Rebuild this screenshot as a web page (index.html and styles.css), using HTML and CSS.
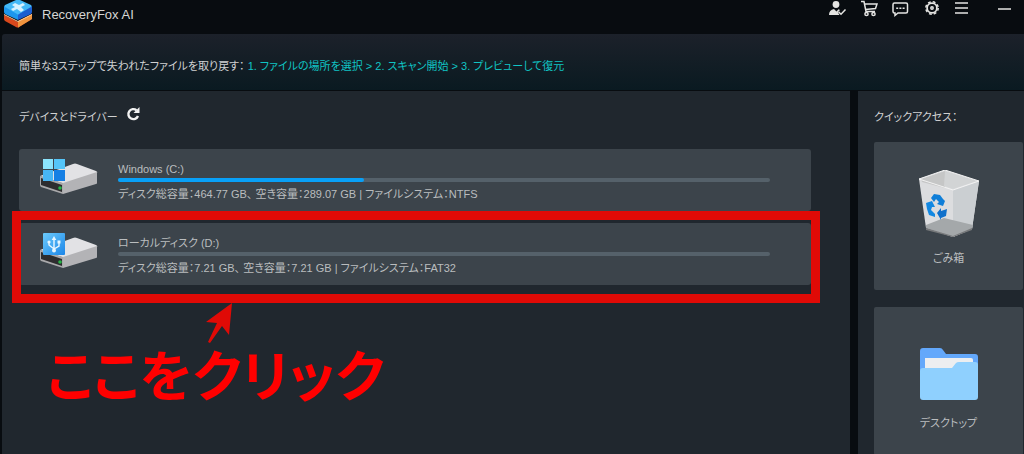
FILE: index.html
```html
<!DOCTYPE html>
<html lang="ja">

<head>
    <meta charset="UTF-8">
    <meta name="viewport" content="width=device-width, initial-scale=1.0">
    <title>RecoveryFox AI</title>
    <link rel="stylesheet" href="styles.css">
</head>

<body>
    <header class="topbar">
        <svg class="logo" viewBox="0 0 28 28" aria-hidden="true">
            <path d="M0 15L14 22L28 14V19L15 27Q14 28 12 27L1 21Q0 20 0 19Z" fill="#d8481c" />
            <path d="M14 21L28 14V19L15 27Q14 28 14 27Z" fill="#f0953f" />
            <path d="M0 14L14 21L28 14V15L14 22L0 15Z" fill="#f9c79a" />
            <path d="M0 6L14 13V20L1 14Q0 13 0 12Z" fill="#1c96ec" />
            <path d="M28 6L14 13V20L27 14Q28 13 28 12Z" fill="#1d5fd0" />
            <path d="M12 0Q14-1 16 0L27 5Q28 6 27 7L15 14Q14 15 13 14L1 7Q0 6 1 5Z" fill="#43b9f7" />
            <path d="M8 5L11 3L15 5L19 3L21 5L17 7L20 10L17 12L13 9L9 11L7 9L11 7Z" fill="#d6f2ff" />
        </svg>
        <h1 class="title">RecoveryFox AI</h1>
        <nav class="tools">
            <button class="tool" aria-label="アカウント">
                <svg viewBox="0 0 18 18">
                    <circle cx="7" cy="4.5" r="3.4" fill="#e4e4e2" />
                    <path d="M0 15Q0 10 5 9L7.5 11.5L9.5 9.2L11 10L8.8 12.2L10.5 15Z" fill="#e4e4e2" />
                    <path d="M9.5 11.8L12 14.2L16.5 9.5" />
                </svg>
            </button>
            <button class="tool" aria-label="カート">
                <svg viewBox="0 0 18 18">
                    <path d="M1 1.5H4L6 11.5H15M4.5 4H17L15.5 8.5L5.5 9.5" />
                    <circle cx="6.5" cy="14" r="1.6" />
                    <circle cx="13.5" cy="14" r="1.6" />
                </svg>
            </button>
            <button class="tool" aria-label="チャット">
                <svg viewBox="0 0 18 18">
                    <path d="M3.5 3H15Q16.5 3 16.5 4.5V11.5Q16.5 13 15 13H7L4 15.5V13H3.5Q2 13 2 11.5V4.5Q2 3 3.5 3Z" />
                    <path d="M5.2 8.2h2M8.4 8.2h2M11.6 8.2h2" />
                </svg>
            </button>
            <button class="tool" aria-label="設定">
                <svg viewBox="0 0 18 18">
                    <circle cx="10" cy="8" r="6.2" stroke-dasharray="2.8 2.07" />
                    <circle cx="10" cy="8" r="4.9" stroke-width="1.8" />
                    <circle cx="10" cy="8" r="1.2" />
                </svg>
            </button>
            <button class="tool" aria-label="メニュー">
                <svg viewBox="0 0 18 18">
                    <path d="M2 3H15M2 8H15M2 13H15" />
                </svg>
            </button>
            <button class="tool minimize" aria-label="最小化">
                <svg viewBox="0 0 18 18">
                    <path d="M2 9H15" />
                </svg>
            </button>
        </nav>
    </header>

    <div class="banner">
        <p>簡単な3ステップで失われたファイルを取り戻す： <span class="steps">1. ファイルの場所を選択 &gt; 2. スキャン開始 &gt; 3. プレビューして復元</span></p>
    </div>

    <div class="layout">
        <main class="devices">
            <div class="heading">
                <h2>デバイスとドライバー</h2>
                <button class="refresh" aria-label="更新">
                    <svg viewBox="0 0 14 14">
                        <path d="M10.5 3.2A5 5 0 1 0 12 9" fill="none" stroke="#f2f2f2" stroke-width="2.4" />
                        <path d="M13.5 0V6H7.5Z" fill="#f2f2f2" />
                    </svg>
                </button>
            </div>

            <button class="drive">
                <svg class="drive-icon" viewBox="0 0 60 38" aria-hidden="true">
                    <path d="M1 18L34 6Q36 5 38 6L57 13Q59 14 58 15L26 26Z" fill="#e2e2e5" />
                    <path d="M24 25L58 14V25Q58 26 57 26L24 36Z" fill="#b3b3b6" />
                    <path d="M1 18L24 25V36L2 29Q1 28 1 27Z" fill="#a9a9ab" />
                    <path d="M2 20L23 27V34L2 27Z" fill="#2d2d2f" />
                    <circle cx="21" cy="30" r="1.8" fill="#25b545" />
                    <path d="M4 1H14V11H4Z" fill="#8be4fc" />
                    <path d="M15 1H26V11H15Z" fill="#55c5f8" />
                    <path d="M4 12H14V23H4Z" fill="#48b6f5" />
                    <path d="M15 12H26V23H15Z" fill="#157fe4" />
                </svg>
                <span class="drive-info">
                    <span class="drive-name">Windows (C:)</span>
                    <span class="bar"><span class="used" style="width: 37.8%"></span></span>
                    <span class="detail">ディスク総容量：464.77 GB、 空き容量：289.07 GB | ファイルシステム：NTFS</span>
                </span>
            </button>

            <button class="drive">
                <svg class="drive-icon" viewBox="0 0 60 38" aria-hidden="true">
                    <defs>
                        <linearGradient id="usb" x1="0" y1="0" x2="1" y2="1">
                            <stop offset="0" stop-color="#6ccbfc" />
                            <stop offset="1" stop-color="#1c86e8" />
                        </linearGradient>
                    </defs>
                    <path d="M1 18L34 6Q36 5 38 6L57 13Q59 14 58 15L26 26Z" fill="#e2e2e5" />
                    <path d="M24 25L58 14V25Q58 26 57 26L24 36Z" fill="#b3b3b6" />
                    <path d="M1 18L24 25V36L2 29Q1 28 1 27Z" fill="#a9a9ab" />
                    <path d="M2 20L23 27V34L2 27Z" fill="#2d2d2f" />
                    <circle cx="21" cy="30" r="1.8" fill="#25b545" />
                    <rect x="4" y="1" width="22" height="22" rx="1" fill="url(#usb)" />
                    <path d="M15 7V18M10 11V13L15 17L20 14V10" fill="none" stroke="#e8f7ff" stroke-width="1.4" />
                    <path d="M12.7 8L15 4L17.3 8Z" fill="#e8f7ff" />
                    <circle cx="10" cy="10" r="1.6" fill="#e8f7ff" />
                    <circle cx="15" cy="18.5" r="2" fill="#e8f7ff" />
                    <path d="M18.5 8.5h3v3h-3z" fill="#e8f7ff" />
                </svg>
                <span class="drive-info">
                    <span class="drive-name">ローカルディスク (D:)</span>
                    <span class="bar"></span>
                    <span class="detail">ディスク総容量：7.21 GB、 空き容量：7.21 GB | ファイルシステム：FAT32</span>
                </span>
                <span class="marker"></span>
            </button>

            <div class="callout">
                <svg class="arrow" viewBox="0 0 26 41" aria-hidden="true">
                    <path d="M26 0L23 32L16 23L4 40L2 39L11 20L0 19Z" fill="#e00a06" />
                </svg>
                <strong>ここをクリック</strong>
            </div>
        </main>

        <aside class="quick">
            <h2>クイックアクセス：</h2>
            <button class="tile">
                <svg class="bin-icon" viewBox="0 0 60 68" aria-hidden="true">
                    <path d="M0 9L26 0L60 11L53 59L34 67L7 58Z" fill="#dcdddf" />
                    <path d="M2 9L26 1L26 18L3 12Z" fill="#c5c6c6" />
                    <path d="M26 1L58 11L34 19L25 16Z" fill="#d2d4d5" />
                    <path d="M34 20L60 11L53 59L34 67Z" fill="#cbcfd2" />
                    <path d="M7 55L25 48L54 55L53 59L34 67L7 58Z" fill="#a4a8aa" />
                    <path d="M7 58L34 66L53 58V60L34 67L7 60Z" fill="#77797b" />
                    <path d="M0 9L26 0L60 11L34 20Z" fill="none" stroke="#f2f2f2" stroke-width="1" />
                    <path d="M12 28L15 24L21 25L24 29L26 31L24 36L18 34L20 32L17 29L15 32Z" fill="#0f7ed8" />
                    <path d="M7 33L13 31L16 37L13 37L12 40L16 44V47L10 45L8 39Z" fill="#1288e2" />
                    <path d="M18 43L22 38V41L28 39L27 46L22 48V50Z" fill="#0f70cb" />
                </svg>
                <span>ごみ箱</span>
            </button>
            <button class="tile">
                <svg class="folder-icon" viewBox="0 0 58 52" aria-hidden="true">
                    <path d="M3 0H20Q22 0 23 2L26 6H55Q58 6 58 9V40H0V3Q0 0 3 0Z" fill="#63a8fb" />
                    <path d="M5 10H51Q53 10 53 12V30H5Z" fill="#eceef0" />
                    <path d="M3 20H32L36 15Q37 14 39 14H55Q58 14 58 17V49Q58 52 55 52H3Q0 52 0 49V23Q0 20 3 20Z" fill="#8fd0fe" />
                </svg>
                <span>デスクトップ</span>
            </button>
        </aside>
    </div>
</body>

</html>
```

FILE: styles.css
```css
* {
    box-sizing: border-box;
}

body {
    display: flex;
    flex-direction: column;
    height: 100vh;
    margin: 0;
    padding-left: 2px;
    overflow: hidden;
    background-color: #080c10;
    color: #d0d1d2;
    font-family: "Liberation Sans", "Noto Sans CJK JP", sans-serif;
    font-size: 11px;
    font-feature-settings: "palt";
}

h1,
h2,
p {
    margin: 0;
    font-weight: normal;
}

h2 {
    font-size: 11px;
    line-height: 20px;
}

button {
    padding: 0;
    border: 0;
    background: none;
    color: inherit;
    font: inherit;
    font-feature-settings: inherit;
    cursor: pointer;
}

svg {
    display: block;
}

.topbar {
    display: flex;
    flex: none;
    align-items: flex-start;
    height: 34px;
    padding-right: 10px;
}

.logo {
    width: 28px;
    height: 28px;
    margin-left: 2px;
}

.title {
    margin-left: 10px;
    padding-top: 6px;
    color: #d6d6d4;
    font-size: 13px;
    line-height: 18px;
}

.tools {
    display: flex;
    gap: 13px;
    margin-left: auto;
}

.tool svg {
    width: 18px;
    height: 18px;
    fill: none;
    stroke: #e4e4e2;
    stroke-width: 1.5;
}

.tool circle[fill],
.tool path[fill] {
    stroke: none;
}

.minimize {
    margin-left: 12px;
}

.banner {
    display: flex;
    flex: none;
    align-items: center;
    height: 56px;
    padding: 6px 17px 0;
    background: linear-gradient(#1c212a, #0a1a21);
    border-top-left-radius: 3px;
}

.steps {
    color: #10c4c4;
}

.layout {
    display: flex;
    flex: 1;
    gap: 8px;
    min-height: 0;
    margin-top: 1px;
}

.devices {
    flex: 1;
    min-width: 0;
    padding: 16px 39px 0 17px;
    background-color: #20272e;
}

.heading {
    display: flex;
    gap: 8px;
    height: 42px;
}

.refresh {
    align-self: flex-start;
}

.refresh svg {
    width: 14px;
    height: 14px;
}

.drive {
    position: relative;
    display: flex;
    align-items: flex-start;
    width: 100%;
    height: 62px;
    margin-bottom: 12px;
    padding: 9px 41px 0 20px;
    background-color: #3c444b;
    border-radius: 3px;
    color: #babdbf;
    text-align: left;
}

.drive-icon {
    flex: none;
    width: 60px;
    height: 38px;
}

.drive-info {
    flex: 1;
    padding: 3px 0 0 19px;
}

.drive-name,
.bar,
.used,
.detail {
    display: block;
}

.drive-name,
.detail {
    line-height: 16px;
    white-space: nowrap;
}

.bar {
    height: 4px;
    margin: 1px 0 4px;
    background-color: #55616a;
    border-radius: 2px;
}

.used {
    height: 4px;
    background-color: #08a0f7;
    border-radius: 2px;
}

/* red frame around the drive to pick */
.marker {
    position: absolute;
    inset: -12px -9px -18px -7px;
    border: 9px solid #e00a06;
}

.callout {
    position: relative;
    padding: 37px 0 0 28px;
    color: #ff0000;
    font-size: 55px;
    line-height: 76px;
    white-space: nowrap;
}

.callout strong {
    font-family: "Noto Sans CJK JP", sans-serif;
    font-weight: 700;
}

.arrow {
    position: absolute;
    top: 6px;
    left: 187px;
    width: 26px;
    height: 41px;
}

.quick {
    flex: none;
    width: 166px;
    padding: 16px 1px 0 16px;
    background-color: #20272e;
}

.tile {
    display: flex;
    flex-direction: column;
    align-items: center;
    width: 100%;
    height: 148px;
    margin-top: 17px;
    background-color: #3c444b;
    border-radius: 2px;
    color: #babdbf;
    line-height: 18px;
}

.quick h2 + .tile {
    margin-top: 15px;
}

.bin-icon {
    width: 60px;
    height: 68px;
    margin: 28px 0 11px;
}

.folder-icon {
    width: 58px;
    height: 52px;
    margin: 41px 0 14px;
}
```
